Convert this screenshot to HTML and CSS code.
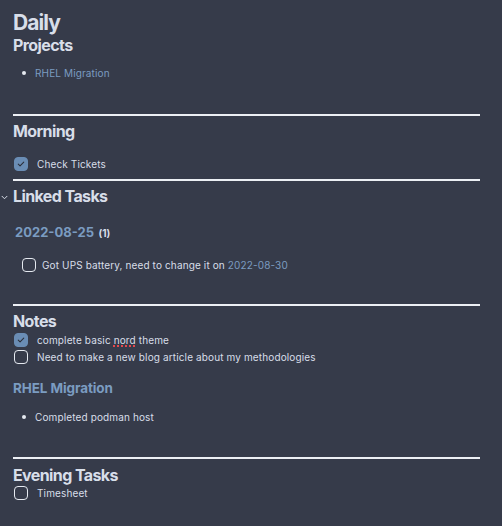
FILE: index.html
```html
<!DOCTYPE html>
<html>
<head>
<meta charset="utf-8">
<link rel="stylesheet" href="styles.css">
</head>
<body>
<main class="note">
  <h1 class="title">Daily</h1>
  <h2 class="heading">Projects</h2>
  <ul class="bullets projects-list">
    <li><a class="link">RHEL Migration</a></li>
  </ul>

  <hr class="rule rule-morning">
  <h2 class="heading after-rule">Morning</h2>
  <div class="task task-morning"><span class="box checked"><svg viewBox="0 0 16 16" width="10" height="10"><path d="M3.6 8.3l2.9 2.8 5.9-6.2" fill="none" stroke="#2b303b" stroke-width="1.7" stroke-linecap="round" stroke-linejoin="round"/></svg></span><span class="task-text">Check Tickets</span></div>

  <hr class="rule rule-linked">
  <div class="linked-head after-rule">
    <svg class="chev" viewBox="0 0 8 6" width="7" height="5"><path d="M1 1.5l3 3 3-3" fill="none" stroke="#d8dee9" stroke-width="1.2" stroke-linecap="round" stroke-linejoin="round"/></svg>
    <h2 class="heading">Linked Tasks</h2>
  </div>
  <div class="group-head"><span class="date">2022-08-25</span> <span class="count">(1)</span></div>
  <div class="task task-linked"><span class="box"></span><span class="task-text">Got UPS battery, need to change it on <a class="link">2022-08-30</a></span></div>

  <hr class="rule rule-notes">
  <h2 class="heading after-rule">Notes</h2>
  <div class="task task-first"><span class="box checked"><svg viewBox="0 0 16 16" width="10" height="10"><path d="M3.6 8.3l2.9 2.8 5.9-6.2" fill="none" stroke="#2b303b" stroke-width="1.7" stroke-linecap="round" stroke-linejoin="round"/></svg></span><span class="task-text">complete basic <span class="spell">nord</span> theme</span></div>
  <div class="task task-next"><span class="box"></span><span class="task-text">Need to make a new blog article about my methodologies</span></div>
  <h3 class="sub">RHEL Migration</h3>
  <ul class="bullets podman-list">
    <li>Completed podman host</li>
  </ul>

  <hr class="rule rule-evening">
  <h2 class="heading after-rule-evening">Evening Tasks</h2>
  <div class="task task-evening"><span class="box"></span><span class="task-text">Timesheet</span></div>
</main>
</body>
</html>
```

FILE: styles.css
```css
html, body {
  margin: 0;
  padding: 0;
  background: #363b4a;
}
body {
  font-family: Inter, "Liberation Sans", Arial, sans-serif;
  color: #d8dee9;
  width: 502px;
  height: 526px;
  overflow: hidden;
}
.note {
  padding: 11px 22px 0 13px;
}
.title {
  margin: 0;
  font-size: 21px;
  line-height: 24px;
  font-weight: 700;
  letter-spacing: -0.9px;
}
.heading {
  margin: 0;
  font-size: 16px;
  line-height: 20px;
  font-weight: 700;
  letter-spacing: -0.6px;
}
.after-rule {
  margin-top: 5px;
}
.after-rule-evening {
  margin-top: 6px;
}
.bullets {
  list-style: none;
  margin: 0;
  padding: 0;
  font-size: 10px;
  line-height: 14px;
  letter-spacing: 0.13px;
}
.bullets li {
  position: relative;
  padding-left: 22px;
}
.bullets li::before {
  content: "";
  position: absolute;
  left: 9px;
  top: 5px;
  width: 4px;
  height: 4px;
  border-radius: 50%;
  background: #e5e9f0;
}
.projects-list {
  margin-top: 11px;
}
.link {
  color: #7b9cc1;
  text-decoration: none;
}
.rule {
  border: 0;
  height: 2px;
  background: #eceff4;
  margin: 0;
}
.rule-morning {
  margin-top: 34px;
}
.rule-linked {
  margin-top: 8px;
}
.rule-notes {
  margin-top: 32px;
}
.rule-evening {
  margin-top: 33px;
}
.task {
  display: flex;
  align-items: flex-start;
  gap: 9px;
  font-size: 10px;
  line-height: 14px;
  letter-spacing: 0.13px;
}
.task .box {
  margin-left: 1px;
}
.task-morning {
  margin-top: 16px;
}
.task-linked {
  margin-top: 17px;
  padding-left: 8px;
  gap: 6px;
}
.task-first {
  margin-top: 2px;
}
.task-next {
  margin-top: 3px;
}
.task-evening {
  margin-top: 1px;
}
.box {
  width: 12px;
  height: 12px;
  border: 1.5px solid #e5e9f0;
  border-radius: 4px;
  display: flex;
  align-items: center;
  justify-content: center;
  flex: none;
}
.box.checked {
  background: #6a8db5;
  border-color: #6a8db5;
}
.linked-head {
  position: relative;
}
.chev {
  position: absolute;
  left: -12px;
  top: 9px;
}
.group-head {
  margin-top: 17px;
  padding-left: 2px;
  line-height: 16px;
}
.date {
  color: #7b9cc1;
  font-size: 13px;
  font-weight: 700;
}
.count {
  font-size: 10px;
  font-weight: 700;
}
.spell {
  text-decoration: underline dotted #e5484d;
  text-decoration-thickness: 1.5px;
  text-underline-offset: 1px;
}
.sub {
  margin: 15px 0 0;
  color: #7b9cc1;
  font-size: 13.5px;
  line-height: 18px;
  font-weight: 700;
  letter-spacing: -0.1px;
}
.podman-list {
  margin-top: 13px;
}
```
